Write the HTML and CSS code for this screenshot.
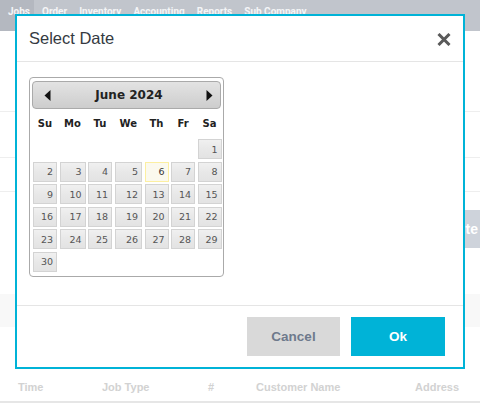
FILE: index.html
```html
<!DOCTYPE html>
<html>
<head>
<meta charset="utf-8">
<link rel="stylesheet" href="styles.css">
</head>
<body>
<nav class="topnav">
  <span class="nav-item active">Jobs</span>
  <span class="nav-item">Order</span>
  <span class="nav-item">Inventory</span>
  <span class="nav-item">Accounting</span>
  <span class="nav-item">Reports</span>
  <span class="nav-item">Sub Company</span>
</nav>
<main class="page">
  <div class="band b1"></div>
  <div class="band b2"></div>
  <div class="band b3"></div>
  <div class="action-row"><button class="route-btn">Route</button></div>
  <div class="fill-row"></div>
  <div class="table-head">
    <span class="th th-time">Time</span>
    <span class="th th-type">Job Type</span>
    <span class="th th-num">#</span>
    <span class="th th-cust">Customer Name</span>
    <span class="th th-addr">Address</span>
  </div>
</main>

<div class="modal">
  <div class="modal-header">
    <span class="modal-title">Select Date</span>
    <svg class="close" width="14" height="13" viewBox="0 0 14 13"><path d="M1.5 1 L12.5 12 M12.5 1 L1.5 12" stroke="#5a5a5a" stroke-width="3" fill="none"/></svg>
  </div>
  <div class="modal-body">
    <div class="datepicker">
      <div class="dp-header">
        <svg class="arrow" width="7" height="11" viewBox="0 0 7 11"><path d="M6.5 0 L0.5 5.5 L6.5 11 Z" fill="#111"/></svg>
        <span class="dp-title">June 2024</span>
        <svg class="arrow" width="7" height="11" viewBox="0 0 7 11"><path d="M0.5 0 L6.5 5.5 L0.5 11 Z" fill="#111"/></svg>
      </div>
      <div class="dp-grid">
        <span class="dn">Su</span><span class="dn">Mo</span><span class="dn">Tu</span><span class="dn">We</span><span class="dn">Th</span><span class="dn">Fr</span><span class="dn">Sa</span>
        <span></span><span></span><span></span><span></span><span></span><span></span><span class="day">1</span>
        <span class="day">2</span><span class="day">3</span><span class="day">4</span><span class="day">5</span><span class="day today">6</span><span class="day">7</span><span class="day">8</span>
        <span class="day">9</span><span class="day">10</span><span class="day">11</span><span class="day">12</span><span class="day">13</span><span class="day">14</span><span class="day">15</span>
        <span class="day">16</span><span class="day">17</span><span class="day">18</span><span class="day">19</span><span class="day">20</span><span class="day">21</span><span class="day">22</span>
        <span class="day">23</span><span class="day">24</span><span class="day">25</span><span class="day">26</span><span class="day">27</span><span class="day">28</span><span class="day">29</span>
        <span class="day">30</span>
      </div>
    </div>
  </div>
  <div class="modal-footer">
    <button class="btn btn-cancel">Cancel</button>
    <button class="btn btn-ok">Ok</button>
  </div>
</div>
</body>
</html>
```

FILE: styles.css
```css
html, body {
  margin: 0;
  padding: 0;
}
body {
  width: 480px;
  height: 409px;
  overflow: hidden;
  background: #fff;
  font-family: "Liberation Sans", Arial, sans-serif;
}

/* background page */
.topnav {
  height: 31px;
  background: #c1c5cc;
  display: flex;
  align-items: flex-start;
}
.nav-item {
  font-family: Roboto, "Liberation Sans", sans-serif;
  font-weight: 700;
  font-size: 10px;
  line-height: 12px;
  color: #f4f5f7;
  padding: 6px 6px 13px;
}
.nav-item.active {
  background: #b4b8c0;
  padding-left: 8px;
  padding-right: 4px;
}
.nav-item:nth-child(2) { margin-left: 2px; }

.page {
  display: flex;
  flex-direction: column;
}
.band {
  border-bottom: 1px solid #eeeeee;
}
.b1 { height: 80px; }
.b2 { height: 45px; }
.b3 { height: 33px; }
.action-row {
  display: flex;
  justify-content: flex-end;
  margin-top: 18px;
  height: 38px;
  margin-right: -12px;
}
.route-btn {
  border: 0;
  background: #ced3db;
  color: #fff;
  font-family: "Liberation Sans", Arial, sans-serif;
  font-weight: 700;
  font-size: 14px;
  padding: 0 14px;
  height: 38px;
}
.fill-row {
  margin-top: 46px;
  height: 33px;
  background: #f8f8f8;
}
.table-head {
  margin-top: 46px;
  height: 28px;
  border-bottom: 2px solid #e6e6e6;
  position: relative;
  font-size: 11px;
  font-weight: 700;
  color: #d2d2d2;
}
.th { position: absolute; top: 8px; }
.th-time { left: 18px; }
.th-type { left: 102px; }
.th-num { left: 208px; }
.th-cust { left: 256px; }
.th-addr { left: 415px; }

/* modal */
.modal {
  position: fixed;
  top: 14px;
  left: 15px;
  width: 450px;
  height: 355px;
  box-sizing: border-box;
  border: 2px solid #00b3d7;
  background: #fff;
  display: flex;
  flex-direction: column;
}
.modal-header {
  height: 45px;
  border-bottom: 1px solid #e5e5e5;
  display: flex;
  align-items: center;
  justify-content: space-between;
  padding: 0 12px 0 12px;
}
.modal-title {
  font-size: 16.5px;
  color: #353a42;
}
.close {
  display: block;
  margin-top: 2px;
}
.modal-body {
  flex: 1;
  padding: 15px 12px 0;
}
.modal-footer {
  border-top: 1px solid #e5e5e5;
  padding: 11px 18px 11px;
  display: flex;
  justify-content: flex-end;
  gap: 11px;
}
.btn {
  border: 0;
  height: 39px;
  font-family: "Liberation Sans", Arial, sans-serif;
  font-weight: 700;
  font-size: 13.5px;
  padding: 0;
}
.btn-cancel {
  width: 93px;
  background: #d9d9d9;
  color: #6e798c;
}
.btn-ok {
  width: 94px;
  background: #00b3d7;
  color: #fff;
}

/* datepicker */
.datepicker {
  width: 195px;
  box-sizing: border-box;
  border: 1px solid #aaaaaa;
  border-radius: 4px;
  padding: 3px 2px 4px;
  font-family: "DejaVu Sans", Verdana, sans-serif;
}
.dp-header {
  height: 28px;
  box-sizing: border-box;
  border: 1px solid #aaaaaa;
  border-radius: 4px;
  background: linear-gradient(#e3e3e3, #cdcdcd);
  display: flex;
  align-items: center;
  justify-content: space-between;
  padding: 0 7px 0 11px;
}
.arrow { display: block; }
.dp-title {
  font-weight: 700;
  font-size: 12px;
  color: #222;
  margin-left: 1px;
}
.dp-grid {
  margin-top: 2px;
  display: grid;
  grid-template-columns: 24px 26px 24px 27.5px 24px 24px 24px;
  grid-template-rows: 25.5px repeat(6, 20px);
  column-gap: 2.5px;
  row-gap: 2.5px;
  padding-left: 1px;
}
.dn {
  font-weight: 700;
  font-size: 10px;
  color: #222;
  display: flex;
  align-items: center;
  justify-content: center;
}
.day {
  box-sizing: border-box;
  border: 1px solid #d3d3d3;
  background: linear-gradient(#f0f0f0, #e8e8e8 50%, #e3e3e3);
  color: #555;
  font-size: 9.5px;
  display: flex;
  align-items: center;
  justify-content: flex-end;
  padding-right: 3px;
}
.day.today {
  border-color: #fcefa1;
  background: #fbf9ee;
  color: #363636;
}
```
